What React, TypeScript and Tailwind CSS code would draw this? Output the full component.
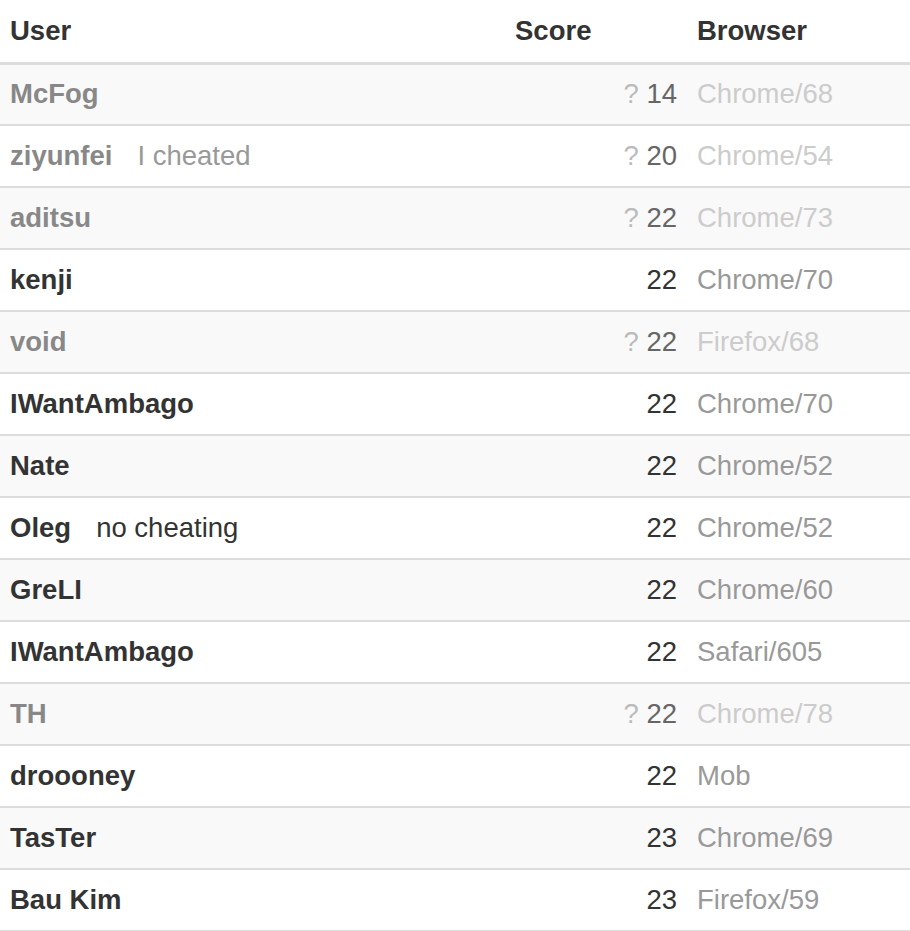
import React from "react";

type Row = {
  name: string;
  note?: string;
  cheat?: boolean;
  score: number;
  browser: string;
};

const rows: Row[] = [
  { name: "McFog", cheat: true, score: 14, browser: "Chrome/68" },
  { name: "ziyunfei", note: "I cheated", cheat: true, score: 20, browser: "Chrome/54" },
  { name: "aditsu", cheat: true, score: 22, browser: "Chrome/73" },
  { name: "kenji", score: 22, browser: "Chrome/70" },
  { name: "void", cheat: true, score: 22, browser: "Firefox/68" },
  { name: "IWantAmbago", score: 22, browser: "Chrome/70" },
  { name: "Nate", score: 22, browser: "Chrome/52" },
  { name: "Oleg", note: "no cheating", score: 22, browser: "Chrome/52" },
  { name: "GreLI", score: 22, browser: "Chrome/60" },
  { name: "IWantAmbago", score: 22, browser: "Safari/605" },
  { name: "TH", cheat: true, score: 22, browser: "Chrome/78" },
  { name: "droooney", score: 22, browser: "Mob" },
  { name: "TasTer", score: 23, browser: "Chrome/69" },
  { name: "Bau Kim", score: 23, browser: "Firefox/59" },
];

export default function App() {
  return (
    <div
      className="w-[910px] bg-white text-[27.5px] leading-[40px] text-[#333]"
      style={{ fontFamily: '"Liberation Sans", Arial, sans-serif' }}
    >
      <table className="w-full border-collapse table-fixed">
        <colgroup>
          <col className="w-[505px]" />
          <col className="w-[182px]" />
          <col />
        </colgroup>
        <thead>
          <tr className="border-b-[3px] border-[#ddd]">
            <th className="h-[63px] px-[10px] text-left font-bold align-middle">User</th>
            <th className="h-[63px] px-[10px] text-left font-bold align-middle">Score</th>
            <th className="h-[63px] px-[10px] text-left font-bold align-middle">Browser</th>
          </tr>
        </thead>
        <tbody>
          {rows.map((r, i) => (
            <tr
              key={i}
              className={`border-b-2 border-[#ddd] ${i % 2 === 0 ? "bg-[#f9f9f9]" : "bg-white"}`}
            >
              <td className="h-[62px] px-[10px] align-middle whitespace-nowrap">
                <span className={`font-bold ${r.cheat ? "text-[#888]" : "text-[#333]"}`}>{r.name}</span>
                {r.note && (
                  <span className={`ml-[25px] ${r.cheat ? "text-[#999]" : "text-[#333]"}`}>{r.note}</span>
                )}
              </td>
              <td className="h-[62px] px-[10px] text-right align-middle whitespace-nowrap">
                {r.cheat && <span className="text-[#bbb]">? </span>}
                <span className={r.cheat ? "text-[#666]" : "text-[#333]"}>{r.score}</span>
              </td>
              <td
                className={`h-[62px] px-[10px] align-middle whitespace-nowrap ${r.cheat ? "text-[#ccc]" : "text-[#999]"}`}
              >
                {r.browser}
              </td>
            </tr>
          ))}
        </tbody>
      </table>
    </div>
  );
}
